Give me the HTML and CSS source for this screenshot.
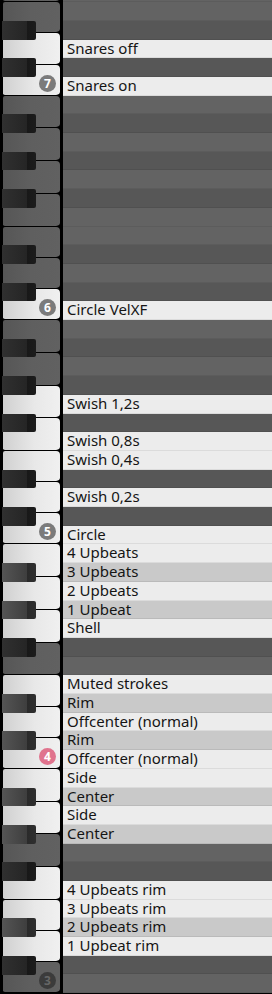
FILE: index.html
```html
<!DOCTYPE html>
<html lang="en">
  <head>
    <meta charset="UTF-8" />
    <meta name="viewport" content="width=device-width, initial-scale=1.0" />
    <title>Drum Map</title>
    <link rel="stylesheet" href="styles.css">
  </head>
  <body>
    <div class="roll">
      <!-- octave 7 -->
      <div class="octave">
        <div class="keys">
          <div class="wk"></div>
          <div class="wk"></div>
          <div class="wk"></div>
          <div class="wk"></div>
          <div class="wk short"></div>
          <div class="wk short on"></div>
          <div class="wk short on"></div>
          <div class="bk as"></div>
          <div class="bk gs"></div>
          <div class="bk fs"></div>
          <div class="bk ds"></div>
          <div class="bk cs"></div>
          <span class="badge">7</span>
        </div>
        <div class="notes">
          <div class="note"></div>
          <div class="note sharp"></div>
          <div class="note"></div>
          <div class="note sharp"></div>
          <div class="note"></div>
          <div class="note sharp"></div>
          <div class="note"></div>
          <div class="note"></div>
          <div class="note sharp"></div>
          <div class="note on">Snares off</div>
          <div class="note sharp"></div>
          <div class="note on">Snares on</div>
        </div>
      </div>

      <!-- octave 6 -->
      <div class="octave">
        <div class="keys">
          <div class="wk"></div>
          <div class="wk"></div>
          <div class="wk"></div>
          <div class="wk"></div>
          <div class="wk short"></div>
          <div class="wk short"></div>
          <div class="wk short on"></div>
          <div class="bk as"></div>
          <div class="bk gs"></div>
          <div class="bk fs"></div>
          <div class="bk ds"></div>
          <div class="bk cs"></div>
          <span class="badge">6</span>
        </div>
        <div class="notes">
          <div class="note"></div>
          <div class="note sharp"></div>
          <div class="note"></div>
          <div class="note sharp"></div>
          <div class="note"></div>
          <div class="note sharp"></div>
          <div class="note"></div>
          <div class="note"></div>
          <div class="note sharp"></div>
          <div class="note"></div>
          <div class="note sharp"></div>
          <div class="note on">Circle VelXF</div>
        </div>
      </div>

      <!-- octave 5 -->
      <div class="octave">
        <div class="keys">
          <div class="wk"></div>
          <div class="wk"></div>
          <div class="wk on"></div>
          <div class="wk on"></div>
          <div class="wk short on"></div>
          <div class="wk short on"></div>
          <div class="wk short on"></div>
          <div class="bk as"></div>
          <div class="bk gs"></div>
          <div class="bk fs"></div>
          <div class="bk ds"></div>
          <div class="bk cs"></div>
          <span class="badge">5</span>
        </div>
        <div class="notes">
          <div class="note"></div>
          <div class="note sharp"></div>
          <div class="note"></div>
          <div class="note sharp"></div>
          <div class="note on">Swish 1,2s</div>
          <div class="note sharp"></div>
          <div class="note on">Swish 0,8s</div>
          <div class="note on">Swish 0,4s</div>
          <div class="note sharp"></div>
          <div class="note on">Swish 0,2s</div>
          <div class="note sharp"></div>
          <div class="note on">Circle</div>
        </div>
      </div>

      <!-- octave 4 -->
      <div class="octave">
        <div class="keys">
          <div class="wk on"></div>
          <div class="wk on"></div>
          <div class="wk on"></div>
          <div class="wk"></div>
          <div class="wk short on"></div>
          <div class="wk short on"></div>
          <div class="wk short on"></div>
          <div class="bk as on"></div>
          <div class="bk gs on"></div>
          <div class="bk fs"></div>
          <div class="bk ds on"></div>
          <div class="bk cs on"></div>
          <span class="badge middle">4</span>
        </div>
        <div class="notes">
          <div class="note on">4 Upbeats</div>
          <div class="note sharp on">3 Upbeats</div>
          <div class="note on">2 Upbeats</div>
          <div class="note sharp on">1 Upbeat</div>
          <div class="note on">Shell</div>
          <div class="note sharp"></div>
          <div class="note"></div>
          <div class="note on">Muted strokes</div>
          <div class="note sharp on">Rim</div>
          <div class="note on">Offcenter (normal)</div>
          <div class="note sharp on">Rim</div>
          <div class="note on">Offcenter (normal)</div>
        </div>
      </div>

      <!-- octave 3 -->
      <div class="octave">
        <div class="keys">
          <div class="wk on"></div>
          <div class="wk on"></div>
          <div class="wk"></div>
          <div class="wk on"></div>
          <div class="wk short on"></div>
          <div class="wk short on"></div>
          <div class="wk short"></div>
          <div class="bk as on"></div>
          <div class="bk gs on"></div>
          <div class="bk fs"></div>
          <div class="bk ds on"></div>
          <div class="bk cs"></div>
          <span class="badge dim">3</span>
        </div>
        <div class="notes">
          <div class="note on">Side</div>
          <div class="note sharp on">Center</div>
          <div class="note on">Side</div>
          <div class="note sharp on">Center</div>
          <div class="note"></div>
          <div class="note sharp"></div>
          <div class="note on">4 Upbeats rim</div>
          <div class="note on">3 Upbeats rim</div>
          <div class="note sharp on">2 Upbeats rim</div>
          <div class="note on">1 Upbeat rim</div>
          <div class="note sharp"></div>
          <div class="note"></div>
        </div>
      </div>
    </div>
  </body>
</html>
```

FILE: styles.css
```css
html,
body {
  margin: 0;
  height: 100%;
  overflow: hidden;
  background-color: #000;
}
body {
  font-family: "Noto Sans", "Open Sans", sans-serif;
}
.roll {
  margin-top: -128.7px; /* top of the view sits just under F7 */
}
.octave {
  display: flex;
  height: 224.4px;
}
.keys {
  position: relative;
  flex: none;
  width: 57px;
  padding: 0 3px;
  display: flex;
  flex-direction: column;
  background-color: #000;
}
.wk {
  height: 32.725px; /* F..B: 7 rows over 4 keys */
  box-sizing: border-box;
  border-bottom: 1px solid #000;
  border-radius: 2px 4px 4px 2px;
  background: linear-gradient(to right, #565656, #5f5f5f 50%, #616161);
  background-clip: padding-box;
}
.wk.short {
  height: 31.1667px; /* C..E: 5 rows over 3 keys */
}
.wk.on {
  background: linear-gradient(to right, #d0d0d0, #e8e8e8 55%, #f0f0f0);
  background-clip: padding-box;
}
.bk {
  position: absolute;
  left: 2px;
  width: 34px;
  height: 18.7px;
  border-radius: 0 2px 2px 0;
  background: linear-gradient(to right, #303030, #252525 25px, #181818 25px, #1c1c1c);
}
.bk.on {
  background: linear-gradient(to right, #555, #3e3e3e 25px, #2a2a2a 25px, #2f2f2f);
}
.as { top: 18.7px; }
.gs { top: 56.1px; }
.fs { top: 93.5px; }
.ds { top: 149.6px; }
.cs { top: 187px; }
.badge {
  position: absolute;
  left: 39px;
  bottom: 4px;
  width: 17px;
  height: 17px;
  border-radius: 50%;
  background-color: #7b7b7b;
  color: #fff;
  font-size: 12px;
  font-weight: bold;
  line-height: 17px;
  text-align: center;
}
.badge.middle {
  background-color: #e0738d;
}
.badge.dim {
  background-color: #3b3b3b;
  color: #666;
}
.notes {
  flex: 1;
  display: flex;
  flex-direction: column;
}
.note {
  height: 18.7px;
  box-sizing: border-box;
  padding-left: 4px;
  font-size: 15px;
  line-height: 16px;
  color: #151515;
  white-space: nowrap;
  background-color: #636363;
  border-bottom: 1px solid rgba(0, 0, 0, 0.07);
}
.note.sharp {
  background-color: #575757;
}
.note.on {
  background-color: #ececec;
}
.note.sharp.on {
  background-color: #c9c9c9;
}
```
